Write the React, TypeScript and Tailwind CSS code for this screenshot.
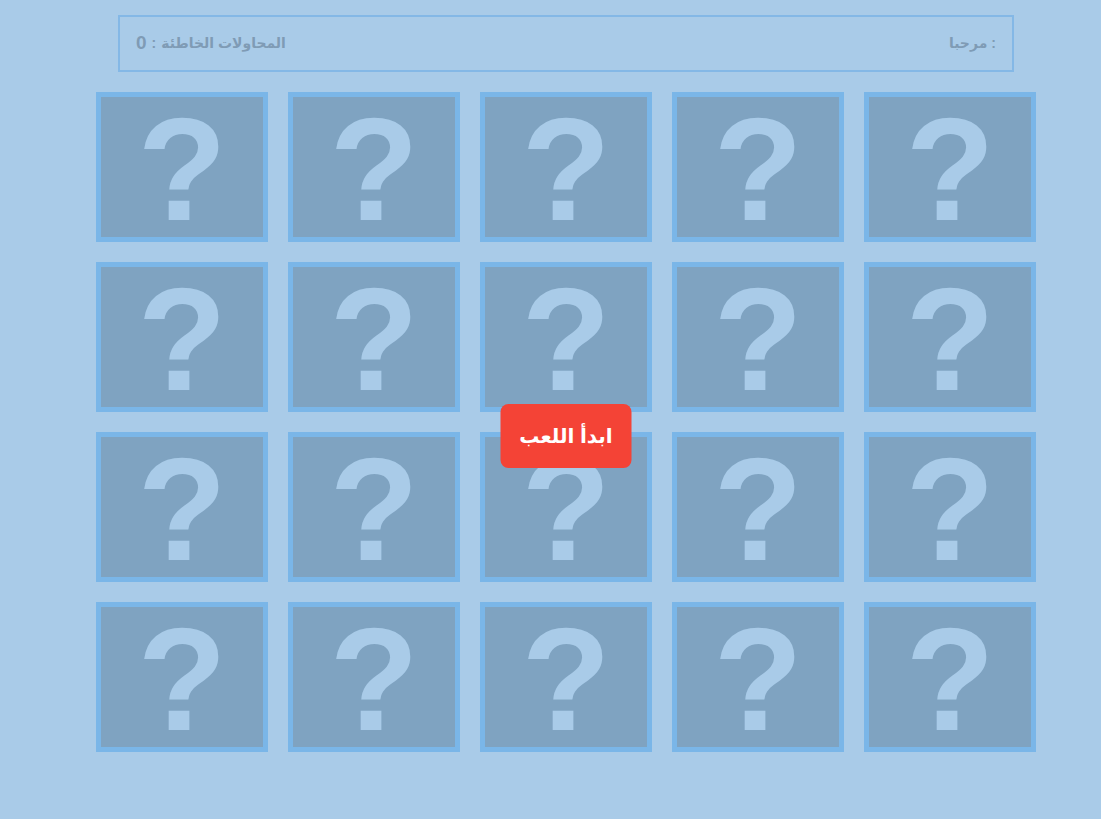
import React from "react";

export default function App() {
  const cards = Array.from({ length: 20 });
  return (
    <div
      className="min-h-[819px] w-full bg-[#a9cbe8] pt-[15px]"
      style={{ fontFamily: '"Liberation Sans", "DejaVu Sans", Arial, sans-serif' }}
    >
      <div className="ml-[96px] w-[940px]">
        <div className="mx-[22px] flex h-[57px] items-center justify-between border-2 border-[#84b8e6] px-[16px] font-bold text-[#7f9bb5]">
          <div className="flex items-center gap-[5px]">
            <span className="text-[19px]">0</span>
            <span className="text-[14px]">:</span>
            <span className="text-[14px]">المحاولات الخاطئة</span>
          </div>
          <div className="flex items-center gap-[4px] text-[14px]">
            <span>مرحبا</span>
            <span>:</span>
          </div>
        </div>
        <div className="relative mt-[20px] grid grid-cols-5 gap-[20px]">
          {cards.map((_, i) => (
            <div
              key={i}
              className="flex h-[150px] w-[172px] items-center justify-center border-[5px] border-[#7ab6e8] bg-[#7fa3c1]"
            >
              <span className="relative top-[3px] text-[146px] font-bold leading-[140px] text-[#a9cbe8]">?</span>
            </div>
          ))}
          <button
            dir="rtl"
            className="absolute left-1/2 top-[312px] h-[64px] w-[131px] -translate-x-1/2 rounded-[8px] bg-[#f44336] text-[20px] font-bold text-white"
          >
            ابدأ اللعب
          </button>
        </div>
      </div>
    </div>
  );
}
